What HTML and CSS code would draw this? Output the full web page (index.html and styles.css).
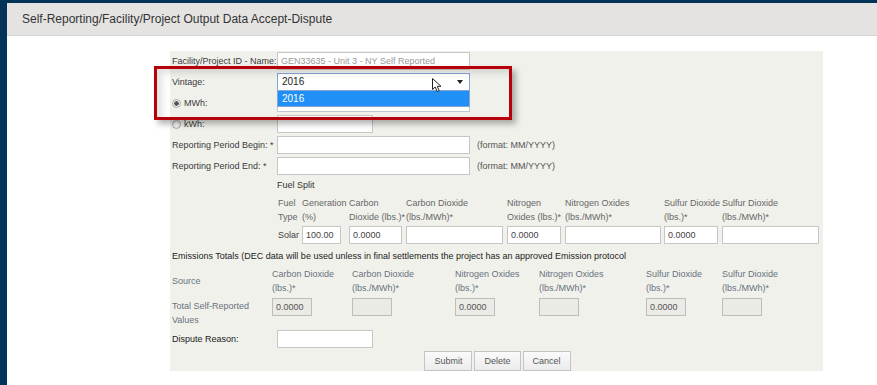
FILE: index.html
```html
<!DOCTYPE html>
<html>

<head>
  <meta charset='utf-8'>
  <title>Self-Reporting Output Data Accept-Dispute</title>
  <link rel="stylesheet" href="styles.css">
</head>

<body>
  <div class='page'>
    <div class='page-header'>Self-Reporting/Facility/Project Output Data Accept-Dispute</div>

    <form class='panel' id='dispute-form'>
      <div class='row'>
        <label>Facility/Project ID - Name:</label>
        <input class='txt wide readonly' type='text' value='GEN33635 - Unit 3 - NY Self Reported' readonly>
      </div>
      <div class='row'>
        <label>Vintage:</label>
        <div class='select-wrap'>
          <div class='select'>2016<span class='caret'></span></div>
          <div class='options'>2016</div>
          <svg class='cursor' width='11' height='15' viewBox='0 0 11 15'>
            <path d='M0.5 0.5 L0.5 11.5 L3.2 9 L5.2 13.6 L7.2 12.7 L5.3 8.3 L9 8.3 Z' fill='#fff' stroke='#222' stroke-width='1' />
          </svg>
        </div>
      </div>
      <div class='row'>
        <label><span class='radio on'></span>MWh:</label>
        <input class='txt wide' type='text'>
      </div>
      <div class='row'>
        <label><span class='radio'></span>kWh:</label>
        <input class='txt short' type='text'>
      </div>
      <div class='row'>
        <label>Reporting Period Begin: *</label>
        <input class='txt wide' type='text'>
        <span class='hint'>(format: MM/YYYY)</span>
      </div>
      <div class='row'>
        <label>Reporting Period End: *</label>
        <input class='txt wide' type='text'>
        <span class='hint'>(format: MM/YYYY)</span>
      </div>

      <div class='fuel'>
        <div class='fuel-title'>Fuel Split</div>
        <div class='fuel-grid'>
          <div class='th'>Fuel<br>Type</div>
          <div class='th'>Generation<br>(%)</div>
          <div class='th'>Carbon<br>Dioxide (lbs.)*</div>
          <div class='th'>Carbon Dioxide<br>(lbs./MWh)*</div>
          <div class='th'>Nitrogen<br>Oxides (lbs.)*</div>
          <div class='th'>Nitrogen Oxides<br>(lbs./MWh)*</div>
          <div class='th'>Sulfur Dioxide<br>(lbs.)*</div>
          <div class='th'>Sulfur Dioxide<br>(lbs./MWh)*</div>

          <div class='td fuel-name'>Solar</div>
          <div class='td'><input class='txt' style='width: 39px' type='text' value='100.00'></div>
          <div class='td'><input class='txt' style='width: 53px' type='text' value='0.0000'></div>
          <div class='td'><input class='txt' style='width: 97px' type='text'></div>
          <div class='td'><input class='txt' style='width: 54px' type='text' value='0.0000'></div>
          <div class='td'><input class='txt' style='width: 96px' type='text'></div>
          <div class='td'><input class='txt' style='width: 54px' type='text' value='0.0000'></div>
          <div class='td'><input class='txt' style='width: 97px' type='text'></div>
        </div>
      </div>

      <div class='totals-title'>Emissions Totals (DEC data will be used unless in final settlements the project has an approved Emission protocol</div>
      <div class='totals-grid'>
        <div class='th source'>Source</div>
        <div class='th'>Carbon Dioxide<br>(lbs.)*</div>
        <div class='th'>Carbon Dioxide<br>(lbs./MWh)*</div>
        <div class='th'>Nitrogen Oxides<br>(lbs.)*</div>
        <div class='th'>Nitrogen Oxides<br>(lbs./MWh)*</div>
        <div class='th'>Sulfur Dioxide<br>(lbs.)*</div>
        <div class='th'>Sulfur Dioxide<br>(lbs./MWh)*</div>

        <div class='th values'>Total Self-Reported<br>Values</div>
        <div class='td'><input class='txt off' type='text' value='0.0000' disabled></div>
        <div class='td'><input class='txt off' type='text' disabled></div>
        <div class='td'><input class='txt off' type='text' value='0.0000' disabled></div>
        <div class='td'><input class='txt off' type='text' disabled></div>
        <div class='td'><input class='txt off' type='text' value='0.0000' disabled></div>
        <div class='td'><input class='txt off' type='text' disabled></div>
      </div>

      <div class='row dispute'>
        <label>Dispute Reason:</label>
        <input class='txt short' type='text'>
      </div>

      <div class='buttons'>
        <button type='submit'>Submit</button>
        <button type='button'>Delete</button>
        <button type='button'>Cancel</button>
      </div>

      <div class='highlight'></div>
    </form>
  </div>
</body>

</html>
```

FILE: styles.css
```css
body {
  margin: 0;
  background-color: #02345a;
  font-family: "Liberation Sans", Arial, sans-serif;
  font-size: 9px;
  color: #333;
}

.page {
  margin: 3px 0 0 7px;
  height: 382px;
  background-color: #fff;
  overflow: hidden;
}

.page-header {
  height: 32px;
  line-height: 33px;
  padding-left: 15px;
  font-size: 12px;
  color: #333;
  background-color: #e4e3e1;
  border-bottom: 1px solid #d6d5d1;
}

.panel {
  position: relative;
  width: 651px;
  height: 319px;
  margin: 15px 0 0 163px;
  padding: 1px 0 0 2px;
  background-color: #f1f1ec;
}

.row {
  display: flex;
  align-items: center;
  height: 18px;
  margin-bottom: 3px;
}

.row label {
  display: flex;
  align-items: center;
  width: 105px;
  flex-shrink: 0;
  color: #3a3a3a;
}

.txt {
  box-sizing: border-box;
  height: 18px;
  padding: 0 3px;
  border: 1px solid #c6c6c6;
  background-color: #fff;
  font-family: inherit;
  font-size: 9px;
  color: #444;
  outline: none;
}

.wide {
  width: 193px;
}

.short {
  width: 96px;
}

.readonly {
  color: #9a9a9a;
}

.hint {
  margin-left: 7px;
  color: #555;
}

/* vintage drop-down, shown open */
.select-wrap {
  position: relative;
  z-index: 2;
}

.select {
  box-sizing: border-box;
  width: 193px;
  height: 18px;
  padding: 0 4px;
  line-height: 16px;
  font-size: 10px;
  color: #222;
  background-color: #fff;
  border: 1px solid #84a3d6;
}

.caret {
  position: absolute;
  top: 7px;
  right: 7px;
  border-left: 3px solid transparent;
  border-right: 3px solid transparent;
  border-top: 4px solid #222;
}

.options {
  position: absolute;
  top: 17px;
  left: 0;
  box-sizing: border-box;
  width: 193px;
  height: 17px;
  padding: 0 4px;
  line-height: 15px;
  font-size: 10px;
  color: #fff;
  background-color: #2190f6;
  border: 1px solid #84a3d6;
}

.cursor {
  position: absolute;
  top: 5px;
  left: 155px;
}

.radio {
  box-sizing: border-box;
  width: 9px;
  height: 9px;
  margin-right: 3px;
  border: 1px solid #aaa;
  border-radius: 50%;
  background: radial-gradient(#fff, #ddd);
}

.radio.on {
  background: radial-gradient(#555 0 2px, #eee 2.5px);
}

/* fuel split */
.fuel {
  margin: 3px 0 0 105px;
}

.fuel-title {
  line-height: 14px;
  color: #333;
}

.fuel-grid {
  display: grid;
  grid-template-columns: 24px 47px 57px 101px 58px 99px 58px 97px;
  margin: 4px 0 0 1px;
}

.th {
  line-height: 14px;
  color: #666;
  white-space: nowrap;
}

.td {
  display: flex;
  align-items: center;
  margin-top: 2px;
}

.fuel-name {
  color: #444;
}

/* emissions totals */
.totals-title {
  margin-top: 5px;
  line-height: 14px;
  color: #222;
}

.totals-grid {
  display: grid;
  grid-template-columns: 100px 80px 103px 84px 107px 76px 97px;
  grid-template-rows: 28px 32px;
  margin-top: 4px;
}

.totals-grid .th {
  color: #67727e;
}

.totals-grid .source {
  align-self: center;
}

.totals-grid .values {
  margin-top: 4px;
}

.totals-grid .td {
  align-items: flex-start;
  margin-top: 3px;
}

.off {
  width: 40px;
  background-color: #ebebe6;
  border-color: #bdbdbd;
  color: #555;
}

.dispute {
  margin: 3px 0 0;
}

.dispute label {
  color: #222;
}

.buttons {
  display: flex;
  justify-content: center;
  gap: 2px;
  margin-top: 3px;
}

button {
  height: 20px;
  padding: 0 9px;
  font-family: inherit;
  font-size: 9px;
  color: #555;
  background: linear-gradient(#fafafa, #ececec);
  border: 1px solid #c4c4c4;
  cursor: pointer;
}

/* annotation box drawn over the screenshot */
.highlight {
  position: absolute;
  top: 15px;
  left: -16px;
  box-sizing: border-box;
  width: 358px;
  height: 54px;
  border: 3px solid #b8000a;
  box-shadow: 4px 4px 6px rgba(0, 0, 0, 0.3), inset 5px 4px 7px rgba(0, 0, 0, 0.12);
  z-index: 3;
  pointer-events: none;
}
```
